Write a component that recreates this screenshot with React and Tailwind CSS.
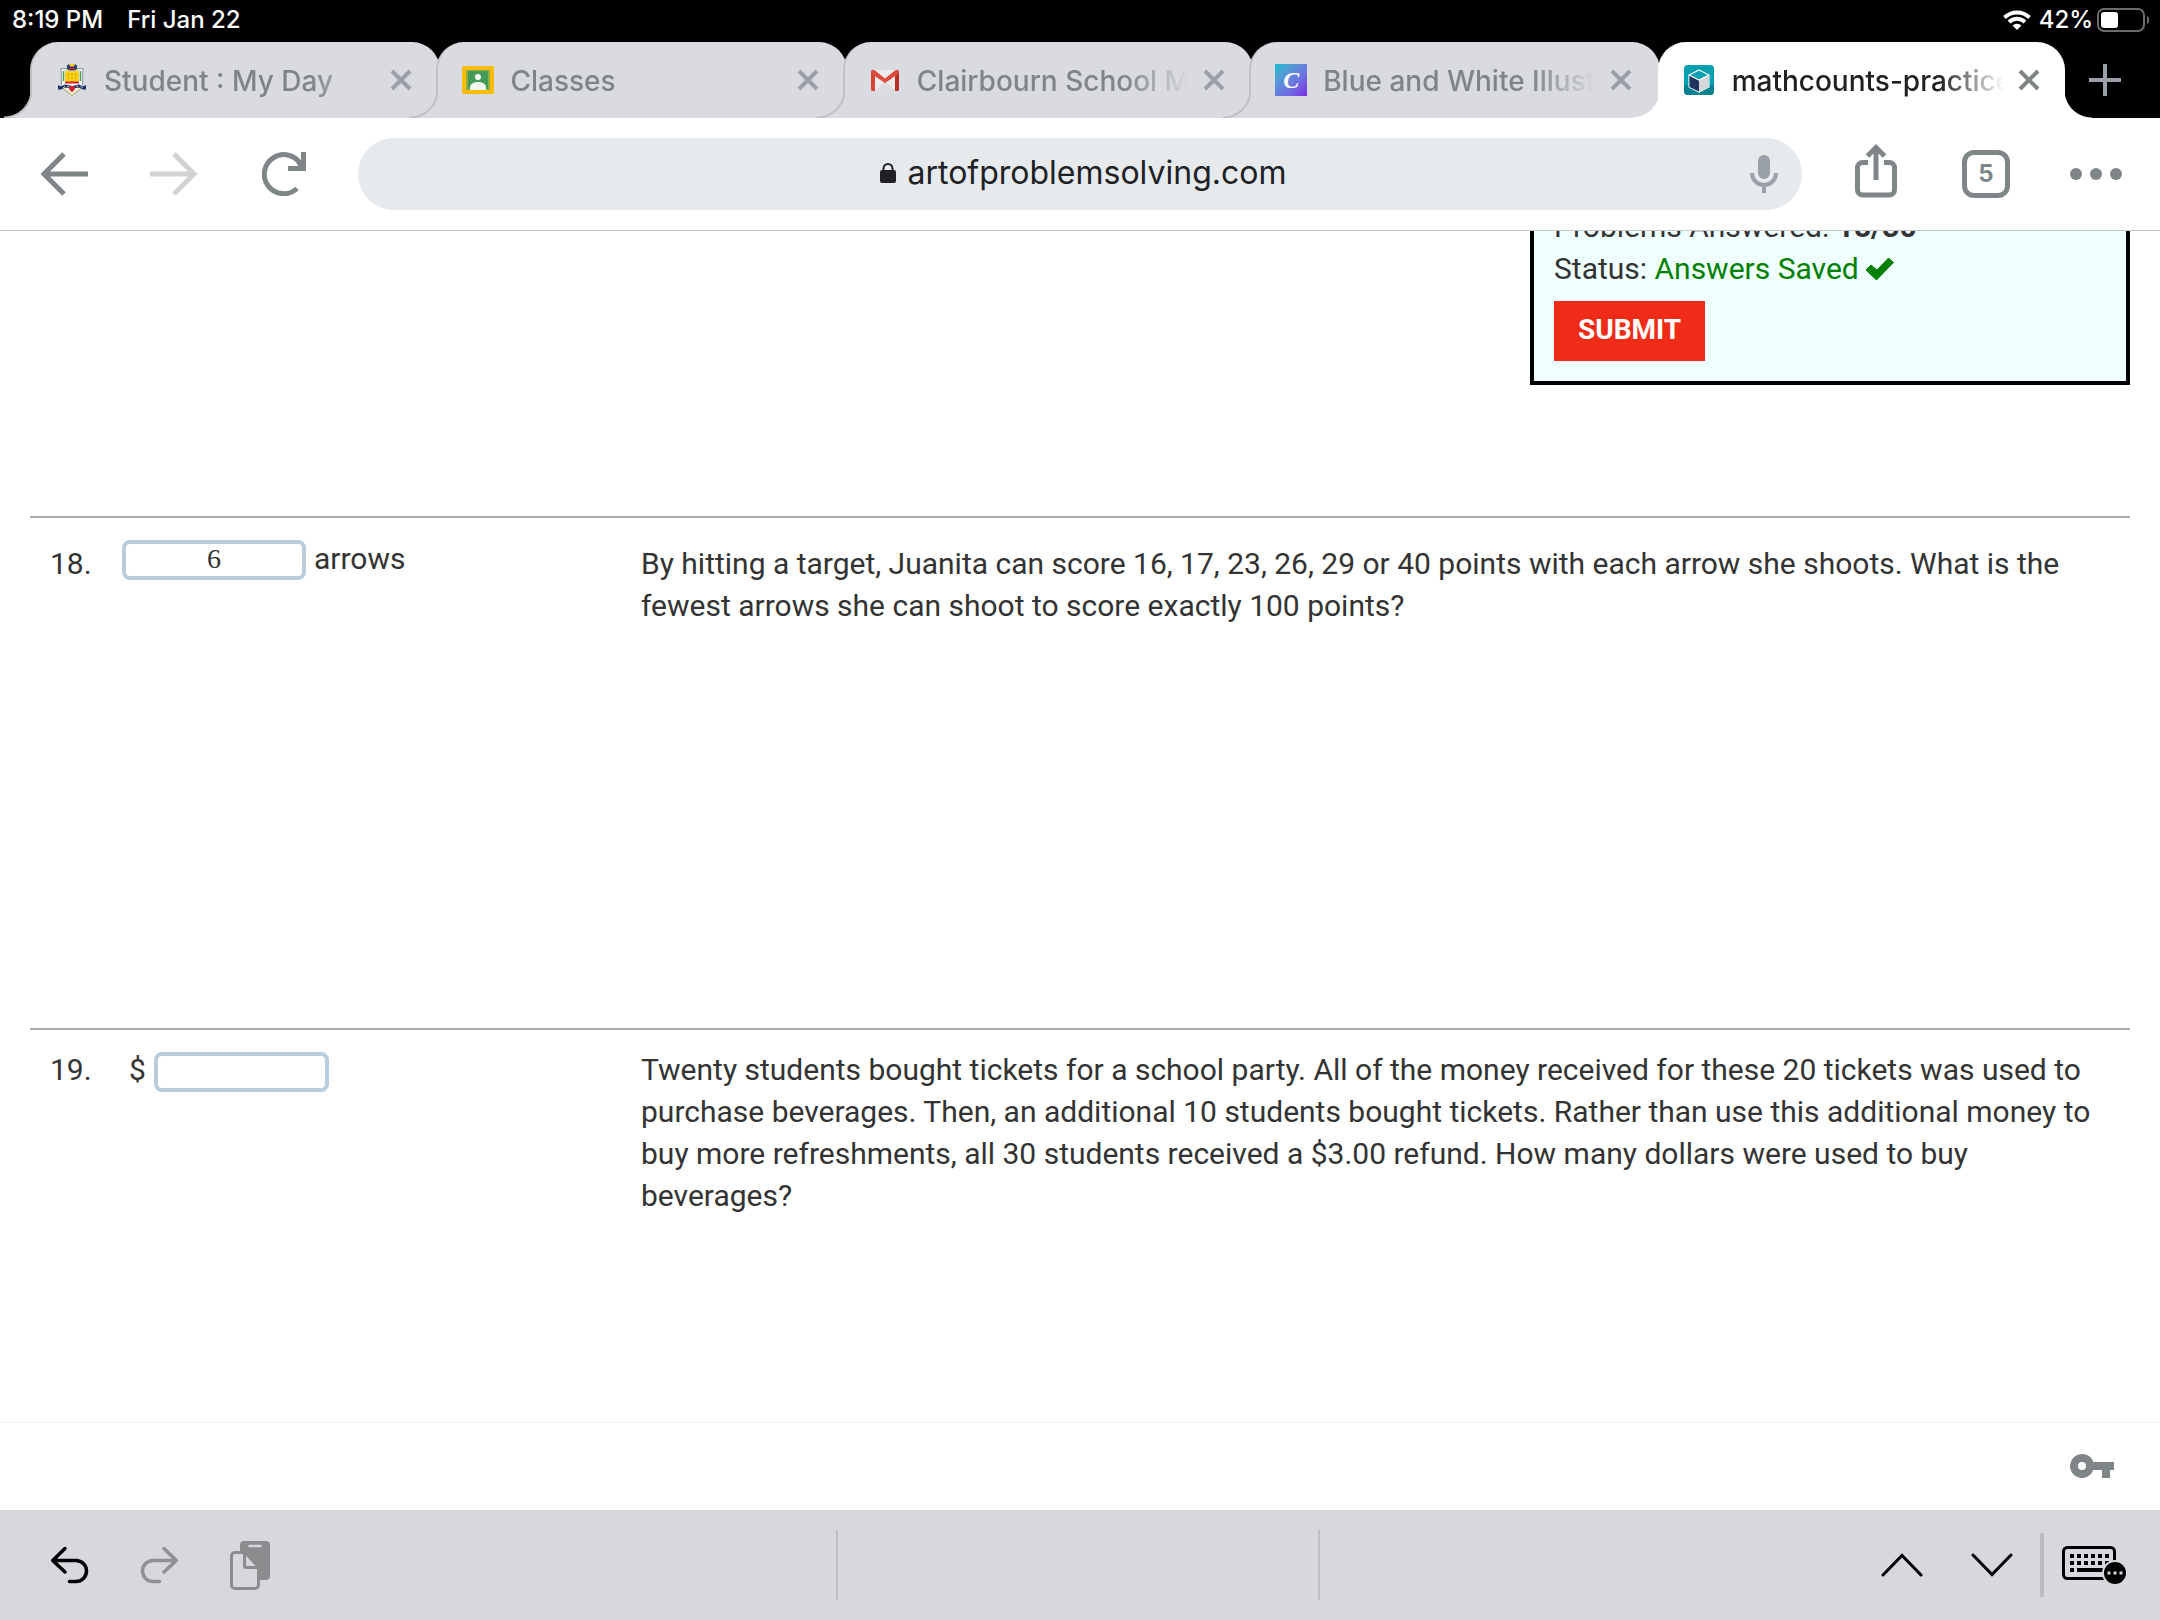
import React from "react";

const CrestIcon = () => (
  <svg viewBox="-2 0 32 32" className="size-8" aria-hidden="true">
    <path d="M3 4.500h22l-.5 17C24 26 18 28 14 31.500 10 28 4 26 3.500 21.500z" fill="#f4f5ef" stroke="#8d95a8" strokeWidth="1" />
    <path d="M5.500 7v10M22.500 7v10" stroke="#4b9b5d" strokeWidth="1.500" />
    <path d="M4 23l10 8.500L24 23z" fill="#e8cf4a" />
    <path d="M6 24l8 6.500 8-6.500z" fill="#f4f5ef" />
    <rect x="7" y="7" width="14" height="11" rx="2" fill="#fbd00e" />
    <path d="M10 10.500h1M13.500 10.500h1M17 10.500h1M10 14h1M13.500 14h1M17 14h1" stroke="#8b7a3a" strokeWidth="1" />
    <path d="M7 17.500h14v2H7z" fill="#d3202f" />
    <path d="M9 1.500L11 0h6l2 1.500V5l-2 1.500h-6L9 5z" fill="#233a7a" />
    <path d="M11 0h6l-1 2.500h-4z" fill="#fbd00e" />
    <path d="M11 4.500h6" stroke="#d3202f" strokeWidth="1.500" />
    <path d="M8 6.500l3 1.500M20 6.500L17 8" stroke="#fbd00e" strokeWidth="1.500" />
    <path d="M0 21l3 1.500 4-2 7 1.500 7-1.500 4 2 3-1.500v4.500h-3l-4-2-7 1-7-1-4 2H0z" fill="#1d2c63" />
    <path d="M5 24l2-2M9 22.500l2 .5M18 22l2 .5M22.500 22l2 2" stroke="#c8cbd6" strokeWidth="1" />
    <path d="M11.500 22h5l.5 3-3 3.500-3-3.500z" fill="#d3202f" />
  </svg>
);

const ClassroomIcon = () => (
  <svg viewBox="0 0 32 32" className="size-8" aria-hidden="true">
    <rect x="0" y="2" width="32" height="28" rx="1" fill="#fbbc0a" />
    <rect x="4" y="6" width="24" height="20" fill="#8fae3c" />
    <rect x="6" y="7" width="20" height="18" fill="#459a57" />
    <circle cx="16" cy="13" r="3" fill="#fff" />
    <path d="M8 26v-3c0-3 4-5 8-5s8 2 8 5v3z" fill="#f4f6f3" />
  </svg>
);

const GmailIcon = () => (
  <svg viewBox="0 0 32 32" className="size-8" aria-hidden="true">
    <path d="M4 6h24v21H4z" fill="#ececec" />
    <path d="M6 27l10-10 10 10z" fill="#dcdcdc" />
    <path d="M2 7h4v20H3.500a1.500 1.500 0 0 1-1.500-1.500z" fill="#d54639" />
    <path d="M26 7h4v18.500a1.500 1.500 0 0 1-1.500 1.500H26z" fill="#b73025" />
    <path d="M2 8c0-2 2-3 4-1.500l10 8 10-8c2-1.500 4-.5 4 1.500 0 1-.5 1.800-1.200 2.300L16 19 3.200 10.300C2.500 9.800 2 9 2 8z" fill="#de4a3d" />
  </svg>
);

const CanvaIcon = () => (
  <span className="flex size-8 items-center justify-center bg-gradient-to-br from-[#07bdcd] to-[#7a2ae6] font-['Liberation_Serif',serif] text-2xl leading-8 font-bold text-white italic">
    C
  </span>
);

const CubeIcon = () => (
  <svg viewBox="0 0 32 32" className="size-8" aria-hidden="true">
    <rect x="0" y="1" width="30" height="30" rx="4" fill="#049fb0" />
    <path d="M0 21h30v6a4 4 0 0 1-4 4H4a4 4 0 0 1-4-4z" fill="#04828f" />
    <path d="M15 6l10 5v12l-10 5-10-5V11z" fill="#049fb0" stroke="#fff" strokeWidth="1.200" />
    <path d="M5.500 11.500L15 16v11.500L5.500 23z" fill="#1d3461" />
    <path d="M24.500 11.500L15 16v11.500l9.500-4.500z" fill="#d5d7da" />
    <path d="M5 11l10 5 10-5" fill="none" stroke="#fff" strokeWidth="1.200" />
  </svg>
);

const CrossIcon = () => (
  <svg viewBox="0 0 22 22" className="size-[22px]" fill="none" stroke="currentColor" strokeWidth="4" aria-hidden="true">
    <path d="M2 2l18 18M20 2L2 20" />
  </svg>
);

const tabs = [
  { title: "Student : My Day", Icon: CrestIcon },
  { title: "Classes", Icon: ClassroomIcon },
  { title: "Clairbourn School Ma", Icon: GmailIcon },
  { title: "Blue and White Illustr", Icon: CanvaIcon },
  { title: "mathcounts-practice", Icon: CubeIcon, active: true },
];

const flareBase = "absolute bottom-0 size-7";
const leftGrey =
  "-left-7 bg-[radial-gradient(circle_at_0_0,transparent_26px,#bfc1c5_27px,#bfc1c5_28px,#dadbe0_29px)]";
const leftWhite = "-left-[28px] bg-[radial-gradient(circle_at_0_0,transparent_27px,#fff_28px)]";
const rightWhite = "-right-[27px] bg-[radial-gradient(circle_at_100%_0,transparent_27px,#fff_28px)]";

function Tab({ title, Icon, active }) {
  return (
    <div
      className={
        "relative flex h-full min-w-0 grow items-center rounded-t-[28px] border-l-2 pl-6 " +
        (active
          ? "ml-0.5 basis-0 border-white bg-white pr-[25px] text-[#202124]"
          : "-mr-1 basis-1 border-[#bfc1c5] bg-[#dadbe0] pr-7 text-[#7d8587]")
      }
    >
      <span className={flareBase + " " + (active ? leftWhite : leftGrey)} />
      {active && <span className={flareBase + " " + rightWhite} />}
      <a href="#tab" aria-current={active ? "page" : undefined} className="flex min-w-0 flex-1 items-center gap-4">
        <Icon />
        <span className="mt-0.5 min-w-0 flex-1 overflow-hidden [mask-image:linear-gradient(to_right,#000_calc(100%-64px),transparent)] text-[28px] leading-9 font-medium whitespace-nowrap">
          {title}
        </span>
      </a>
      <button aria-label={"Close " + title} className={"ml-3.5 " + (active ? "text-[#7d8587]" : "text-[#9aa0a8]")}>
        <CrossIcon />
      </button>
    </div>
  );
}

function StatusBar() {
  return (
    <div className="flex h-[42px] items-center justify-between pr-2.5 pl-3 text-2xl leading-7 font-medium text-white">
      <div className="flex gap-6 pb-0.5">
        <span>8:19 PM</span>
        <span>Fri Jan 22</span>
      </div>
      <div className="flex items-center gap-2 pb-0.5">
        <svg viewBox="0 0 28 20" className="h-5 w-7" fill="none" stroke="#fff" strokeWidth="4" aria-hidden="true">
          <path d="M1.500 7.500a18 18 0 0 1 25 0M6 12a11.500 11.500 0 0 1 16 0" />
          <path d="M14 20l-4.500-4.500a6.500 6.500 0 0 1 9 0z" fill="#fff" stroke="none" />
        </svg>
        <span>42%</span>
        <svg viewBox="0 0 53 24" className="-ml-1 h-6 w-[53px]" aria-hidden="true">
          <rect x="1" y="1" width="46" height="22" rx="6" fill="none" stroke="#6b6b6b" strokeWidth="2" />
          <rect x="4" y="4" width="17" height="16" rx="3" fill="#fff" />
          <path d="M50 8c3 1 3 7 0 8z" fill="#6b6b6b" />
        </svg>
      </div>
    </div>
  );
}

function Toolbar() {
  return (
    <div className="flex h-[113px] items-center border-b border-[#c4c8c8] bg-white pr-[38px] pl-10 text-[#7f8688]">
      <button aria-label="Back">
        <svg viewBox="0 0 48 44" className="h-11 w-12" fill="none" stroke="currentColor" strokeWidth="5" aria-hidden="true">
          <path d="M48 22H3M24 2L4 22l20 20" />
        </svg>
      </button>
      <button aria-label="Forward" className="ml-[62px] text-[#d3d3d3]">
        <svg viewBox="0 0 48 44" className="h-11 w-12" fill="none" stroke="currentColor" strokeWidth="5" aria-hidden="true">
          <path d="M0 22h45M24 2l20 20-20 20" />
        </svg>
      </button>
      <button aria-label="Reload" className="ml-16">
        <svg viewBox="0 0 44 44" className="size-11" fill="none" stroke="currentColor" strokeWidth="5" aria-hidden="true">
          <path d="M35 36.500A19.500 19.500 0 1 1 39 13" />
          <path d="M41.500 0v16.500H26" />
          <path d="M34 8l8 8h-5z" fill="currentColor" stroke="none" />
        </svg>
      </button>
      <div className="ml-[52px] flex h-[72px] flex-1 items-center rounded-full bg-[#e6eaed] pr-6 pl-[58px]">
        <button className="flex flex-1 items-center justify-center gap-3 pb-0.5 text-[32px] leading-10 text-[#202124]">
          <svg viewBox="0 0 16 20" className="h-5 w-4" aria-hidden="true">
            <rect x="0" y="7" width="16" height="13" rx="2" fill="currentColor" />
            <path d="M3.500 8V5.500a4.500 4.500 0 0 1 9 0V8" fill="none" stroke="currentColor" strokeWidth="2" />
          </svg>
          artofproblemsolving.com
        </button>
        <button aria-label="Voice search" className="text-[#9aa0a8]">
          <svg viewBox="0 0 28 38" className="h-[38px] w-7" fill="none" stroke="currentColor" strokeWidth="4" aria-hidden="true">
            <rect x="8" y="0" width="12" height="24" rx="6" fill="currentColor" stroke="none" />
            <path d="M2 18a12 12 0 0 0 24 0M14 30v8" />
          </svg>
        </button>
      </div>
      <button aria-label="Share" className="ml-[53px]">
        <svg viewBox="0 0 42 54" className="mb-1.5 h-[54px] w-[42px]" fill="none" stroke="currentColor" strokeWidth="5" aria-hidden="true">
          <path d="M13 18.500H7.500a5 5 0 0 0-5 5v22.500a5 5 0 0 0 5 5h27a5 5 0 0 0 5-5V23.500a5 5 0 0 0-5-5H29" />
          <path d="M21 36V4M12.500 12L21 3.500 29.500 12" />
        </svg>
      </button>
      <button
        aria-label="Open tabs"
        className="ml-[65px] flex size-12 items-center justify-center rounded-[12px] border-5 border-current text-2xl leading-8 font-bold"
      >
        5
      </button>
      <button aria-label="Menu" className="ml-[60px] flex gap-2">
        <span className="size-3 rounded-full bg-current" />
        <span className="size-3 rounded-full bg-current" />
        <span className="size-3 rounded-full bg-current" />
      </button>
    </div>
  );
}

const answerBox =
  "h-10 rounded-[8px] border-4 border-[#bacddc] bg-white pb-0.5 text-center font-['Liberation_Serif',serif] text-[28px] leading-7 text-[#333] outline-none";

function StatusPanel() {
  return (
    <div className="-mt-[25px] ml-auto w-[600px] border-4 border-t-0 border-black bg-[#f0ffff] px-5 pb-5">
      <p>
        Problems Answered: <b>18/30</b>
      </p>
      <p className="flex items-center">
        Status:&nbsp;<span className="text-[#008000]">Answers Saved</span>
        <svg viewBox="0 0 28 22" className="ml-[7px] h-[22px] w-7" aria-hidden="true">
          <path d="M0 12l5-5 6 5L22.500 0l5 4.500L10.500 22z" fill="#008000" stroke="#008000" strokeLinejoin="round" />
        </svg>
      </p>
      <button className="mt-[11px] flex h-[60px] items-center bg-[#f02b17] px-6 pb-0.5 text-[28px] leading-8 font-bold text-white">
        SUBMIT
      </button>
    </div>
  );
}

function App() {
  return (
    <div className="flex h-screen flex-col overflow-hidden bg-white font-['Inter',sans-serif]">
      <header className="shrink-0 bg-black">
        <StatusBar />
        <nav className="flex h-[76px] items-center pl-[30px]">
          {tabs.map((tab) => (
            <Tab key={tab.title} {...tab} />
          ))}
          <button aria-label="New tab" className="mr-[39px] ml-6 text-[#9aa0a8]">
            <svg viewBox="0 0 32 32" className="size-8" stroke="currentColor" strokeWidth="4" aria-hidden="true">
              <path d="M16 0v32M0 16h32" />
            </svg>
          </button>
        </nav>
        <Toolbar />
      </header>

      <main className="flex-1 overflow-hidden px-[30px] font-['Roboto',sans-serif] text-[30px] leading-[42px] text-[#333]">
        <StatusPanel />
        <section className="mt-[131px] grid h-[512px] grid-cols-[70px_521px_1fr] content-start border-t-2 border-[#aaa] pt-5 pl-5">
          <span className="pt-[5px]">18.</span>
          <label className="flex items-end gap-2 self-start pl-0.5">
            <input className={answerBox + " w-[184px]"} defaultValue="6" />
            arrows
          </label>
          <p className="pt-[5px] pr-7">
            By hitting a target, Juanita can score 16, 17, 23, 26, 29 or 40 points with each arrow she shoots. What is
            the fewest arrows she can shoot to score exactly 100 points?
          </p>
        </section>
        <section className="grid grid-cols-[70px_521px_1fr] content-start border-t-2 border-[#aaa] pt-[19px] pl-5">
          <span>19.</span>
          <label className="flex items-start gap-2 self-start pl-[9px]">
            $
            <input className={answerBox + " mt-[3px] w-[175px]"} />
          </label>
          <p className="pr-7">
            Twenty students bought tickets for a school party. All of the money received for these 20 tickets was used
            to purchase beverages. Then, an additional 10 students bought tickets. Rather than use this additional money
            to buy more refreshments, all 30 students received a $3.00 refund. How many dollars were used to buy
            beverages?
          </p>
        </section>
      </main>

      <div className="flex h-22 shrink-0 items-center justify-end border-t border-[#f1f1f1] bg-white pr-[46px] pb-0.5">
        <button aria-label="Passwords" className="text-[#7f8688]">
          <svg viewBox="0 0 44 24" className="h-6 w-11" fill="currentColor" aria-hidden="true">
            <path
              fillRule="evenodd"
              d="M12 0a12 12 0 0 1 11.300 8H44v8h-4v8h-8v-8h-8.700A12 12 0 1 1 12 0zm0 8a4 4 0 1 0 0 8 4 4 0 0 0 0-8z"
            />
          </svg>
        </button>
      </div>

      <footer className="flex h-[110px] shrink-0 items-center bg-[#d6d8dd] pr-[34px] pl-[30px] text-black">
        <div className="flex flex-1 items-center">
          <button aria-label="Undo" className="ml-5">
            <svg viewBox="0 0 40 38" className="h-[38px] w-10" fill="none" stroke="currentColor" strokeWidth="3.500" strokeLinecap="round" strokeLinejoin="round" aria-hidden="true">
              <path d="M15 2.500L2.700 14.500 15 26M3 14.500h23a10.500 10.500 0 0 1 0 21h-6.500" />
            </svg>
          </button>
          <button aria-label="Redo" className="ml-[50px] text-[#8f9092]">
            <svg viewBox="0 0 40 38" className="h-[38px] w-10" fill="none" stroke="currentColor" strokeWidth="3.500" strokeLinecap="round" strokeLinejoin="round" aria-hidden="true">
              <path d="M24 2.500l12.300 12L24 26M36 14.500H13a10.500 10.500 0 0 0 0 21h6.500" />
            </svg>
          </button>
          <button aria-label="Paste" className="ml-[50px] text-[#8b8c8e]">
            <svg viewBox="0 0 40 50" className="mt-0.5 h-[50px] w-10" fill="none" stroke="currentColor" strokeWidth="3" strokeLinejoin="round" aria-hidden="true">
              <path d="M14 0h22a4 4 0 0 1 4 4v31a4 4 0 0 1-4 4h-6V26L15 10h-5V4a4 4 0 0 1 4-4z" fill="currentColor" stroke="none" />
              <path d="M19.500 5h11" stroke="#d6d8dd" strokeWidth="2.500" strokeLinecap="round" />
              <path d="M5 11.500h10L28.500 26v18a3.500 3.500 0 0 1-3.500 3.500H5A3.500 3.500 0 0 1 1.500 44V15A3.500 3.500 0 0 1 5 11.500z" fill="#d6d8dd" />
              <path d="M14.500 12v12.500a2 2 0 0 0 2 2H28" />
            </svg>
          </button>
        </div>
        <div className="h-[70px] w-[484px] border-x-2 border-[#bfc0c4]" />
        <div className="flex flex-1 items-center justify-end">
          <button aria-label="Previous field">
            <svg viewBox="0 0 42 24" className="h-6 w-[42px]" fill="none" stroke="currentColor" strokeWidth="3" strokeLinecap="round" aria-hidden="true">
              <path d="M2 22L21 2.500 40 22" />
            </svg>
          </button>
          <button aria-label="Next field" className="ml-12">
            <svg viewBox="0 0 42 24" className="h-6 w-[42px]" fill="none" stroke="currentColor" strokeWidth="3" strokeLinecap="round" aria-hidden="true">
              <path d="M2 2l19 19.500L40 2" />
            </svg>
          </button>
          <span className="ml-[27px] h-16 w-1 bg-[#bcbdc1]" />
          <button aria-label="Keyboard options" className="ml-[18px]">
            <svg viewBox="0 0 64 38" className="h-[38px] w-16" fill="none" stroke="currentColor" aria-hidden="true">
              <rect x="1.500" y="1.500" width="51" height="31" rx="4" strokeWidth="3" />
              <path d="M8 10h40M8 17h40" strokeWidth="4" strokeDasharray="4 3" />
              <path d="M8 24h4M15 24h26" strokeWidth="4" />
              <circle cx="53" cy="27" r="13" fill="#d6d8dd" stroke="none" />
              <circle cx="53" cy="27" r="11" fill="currentColor" stroke="none" />
              <path d="M45.500 27h3M51.500 27h3M57.500 27h3" stroke="#d6d8dd" strokeWidth="3" />
            </svg>
          </button>
        </div>
      </footer>
    </div>
  );
}

export default App;
